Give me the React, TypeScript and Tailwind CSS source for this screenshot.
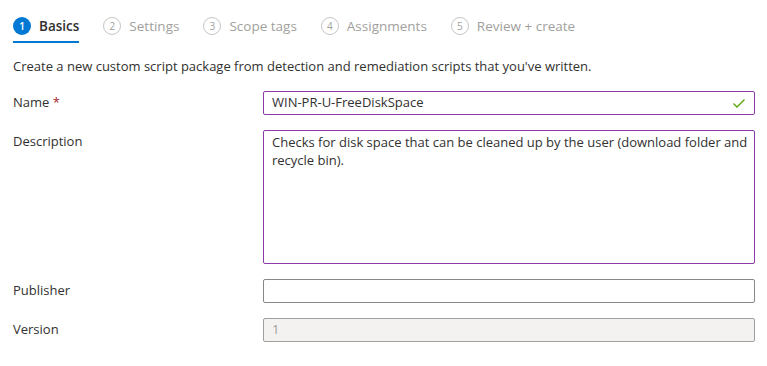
import React from "react";

const steps = [
  { n: 1, label: "Basics", active: true },
  { n: 2, label: "Settings" },
  { n: 3, label: "Scope tags" },
  { n: 4, label: "Assignments" },
  { n: 5, label: "Review + create" },
];

function Check() {
  return (
    <svg width="14" height="14" viewBox="0 0 14 14" fill="none">
      <path d="M1.5 7.5 L5 11 L12.5 3.5" stroke="#57a300" strokeWidth="1.3" />
    </svg>
  );
}

export default function App() {
  return (
    <div className="w-[767px] h-[366px] bg-white text-[#323130] text-[13px] font-['Open_Sans',sans-serif] overflow-hidden">
      {/* STEPS */}
      <div className="flex items-start gap-[24px] pl-[13px] pt-[15px]">
        {steps.map((s) => (
          <div key={s.n} className="flex flex-col">
            <div className="flex items-center gap-[8px] h-[22px]">
              {s.active ? (
                <span className="flex items-center justify-center w-[18px] h-[18px] rounded-full bg-[#0078d4] text-white text-[10px] font-semibold">
                  {s.n}
                </span>
              ) : (
                <span className="flex items-center justify-center w-[18px] h-[18px] rounded-full border border-[#c8c6c4] text-[#a19f9d] text-[10px]">
                  {s.n}
                </span>
              )}
              <span className={s.active ? "text-[13.5px] font-semibold text-[#323130]" : "text-[13.5px] text-[#a19f9d]"}>
                {s.label}
              </span>
            </div>
            <div className={s.active ? "mt-[4px] h-[2px] bg-[#0078d4]" : "mt-[4px] h-[2px]"} />
          </div>
        ))}
      </div>

      <p className="pl-[13px] mt-[14px] leading-[18px]">
        Create a new custom script package from detection and remediation scripts that you've written.
      </p>

      {/* FORM */}
      <div className="flex flex-col pl-[13px] pr-[12px] mt-[16px]">
        <div className="flex items-center">
          <label className="w-[250px]">
            Name <span className="text-[#a4262c]">*</span>
          </label>
          <div className="flex-1 h-[24px] flex items-center justify-between border border-[#8a3aaa] rounded-[2px] px-[8px]">
            <span>WIN-PR-U-FreeDiskSpace</span>
            <Check />
          </div>
        </div>

        <div className="flex items-start mt-[15px]">
          <label className="w-[250px] pt-[2px]">Description</label>
          <div className="flex-1 h-[134px] border border-[#8a3aaa] rounded-[2px] pl-[8px] pr-[2px] pt-[2px] leading-[18px]">
            Checks for disk space that can be cleaned up by the user (download folder and recycle bin).
          </div>
        </div>

        <div className="flex items-center mt-[15px]">
          <label className="w-[250px]">Publisher</label>
          <div className="flex-1 h-[24px] border border-[#8a8886] rounded-[2px]" />
        </div>

        <div className="flex items-center mt-[15px]">
          <label className="w-[250px]">Version</label>
          <div className="flex-1 h-[24px] flex items-center border border-[#a19f9d] bg-[#f3f2f1] rounded-[2px] px-[8px] text-[#a19f9d]">
            1
          </div>
        </div>
      </div>
    </div>
  );
}
